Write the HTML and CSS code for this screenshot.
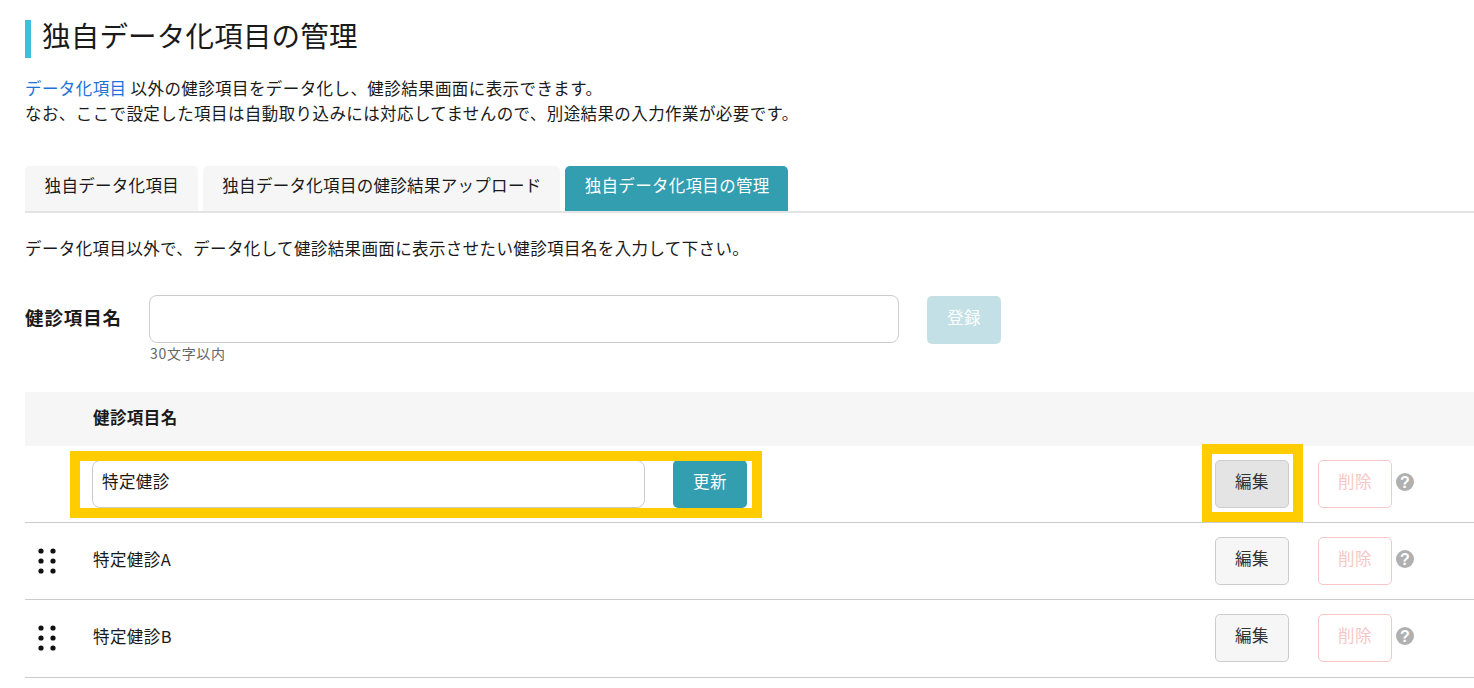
FILE: index.html
```html
<!DOCTYPE html>
<html lang="ja">
<head>
<meta charset="utf-8">
<title>独自データ化項目の管理</title>
<link rel="stylesheet" href="styles.css">
</head>
<body>
<main class="page">
  <h1 class="title">独自データ化項目の管理</h1>
  <p class="intro"><a class="link" href="#">データ化項目</a> 以外の健診項目をデータ化し、健診結果画面に表示できます。<br>なお、ここで設定した項目は自動取り込みには対応してませんので、別途結果の入力作業が必要です。</p>
  <nav class="tabs">
    <a class="tab" href="#">独自データ化項目</a>
    <a class="tab" href="#">独自データ化項目の健診結果アップロード</a>
    <a class="tab tab-active" href="#">独自データ化項目の管理</a>
  </nav>
  <p class="lead">データ化項目以外で、データ化して健診結果画面に表示させたい健診項目名を入力して下さい。</p>
  <form class="form">
    <label class="form-label">健診項目名</label>
    <div class="form-field">
      <input class="input input-main" type="text">
      <small class="hint">30文字以内</small>
    </div>
    <button class="btn btn-disabled" type="button">登録</button>
  </form>
  <section class="table">
    <div class="head">健診項目名</div>
    <div class="row row-edit">
      <div class="handle"></div>
      <div class="name name-edit">
        <input class="input input-row" type="text" value="特定健診">
        <button class="btn btn-primary" type="button">更新</button>
      </div>
      <button class="btn btn-edit btn-pressed" type="button">編集</button>
      <button class="btn btn-delete" type="button">削除</button>
      <svg class="help" viewBox="0 0 18 18"><circle cx="9" cy="9" r="9" fill="#b0b0b0"/><text x="9" y="14.5" text-anchor="middle" class="help-mark">?</text></svg>
      <span class="mark mark-name"></span>
      <span class="mark mark-edit"></span>
    </div>
    <div class="row">
      <div class="handle"><svg class="dots" viewBox="0 0 18 26"><g fill="#111"><circle cx="3" cy="3" r="2.6"/><circle cx="15" cy="3" r="2.6"/><circle cx="3" cy="13" r="2.6"/><circle cx="15" cy="13" r="2.6"/><circle cx="3" cy="23" r="2.6"/><circle cx="15" cy="23" r="2.6"/></g></svg></div>
      <div class="name">特定健診A</div>
      <button class="btn btn-edit" type="button">編集</button>
      <button class="btn btn-delete" type="button">削除</button>
      <svg class="help" viewBox="0 0 18 18"><circle cx="9" cy="9" r="9" fill="#b0b0b0"/><text x="9" y="14.5" text-anchor="middle" class="help-mark">?</text></svg>
    </div>
    <div class="row">
      <div class="handle"><svg class="dots" viewBox="0 0 18 26"><g fill="#111"><circle cx="3" cy="3" r="2.6"/><circle cx="15" cy="3" r="2.6"/><circle cx="3" cy="13" r="2.6"/><circle cx="15" cy="13" r="2.6"/><circle cx="3" cy="23" r="2.6"/><circle cx="15" cy="23" r="2.6"/></g></svg></div>
      <div class="name">特定健診B</div>
      <button class="btn btn-edit" type="button">編集</button>
      <button class="btn btn-delete" type="button">削除</button>
      <svg class="help" viewBox="0 0 18 18"><circle cx="9" cy="9" r="9" fill="#b0b0b0"/><text x="9" y="14.5" text-anchor="middle" class="help-mark">?</text></svg>
    </div>
  </section>
</main>
</body>
</html>
```
FILE: styles.css
```css
* { box-sizing: border-box; }
html, body { margin: 0; padding: 0; background: #fff; overflow: hidden; }
body {
  height: 688px;
  font-family: "Noto Sans CJK JP", "Noto Sans", sans-serif;
  font-size: 16.5px;
  letter-spacing: .41px;
  color: #1a1a1a;
}
.page { padding: 20px 0 0 25px; }
.title {
  height: 38px;
  margin: 0;
  padding-left: 11px;
  border-left: 6px solid #3cc0dc;
  font-size: 28.5px;
  font-weight: 400;
  line-height: 30px;
  letter-spacing: .2px;
}
.intro { margin: 18px 0 0; line-height: 25px; }
.link { color: #1a73d8; text-decoration: none; }
.tabs {
  display: flex;
  gap: 5px;
  height: 47px;
  margin-top: 40px;
  border-bottom: 2px solid #e4e4e4;
}
.tab {
  padding: 0 18.7px 0 19.6px;
  background: #f6f6f6;
  border-radius: 5px 5px 0 0;
  color: #1a1a1a;
  letter-spacing: .3px;
  line-height: 39px;
  text-decoration: none;
}
.tab-active { background: #329eb0; color: #fff; }
.lead { margin: 23px 0 0; letter-spacing: .38px; line-height: 24px; }
.form { display: flex; align-items: flex-start; margin-top: 35px; }
.form-label {
  width: 124px;
  font-size: 18.5px;
  font-weight: 700;
  letter-spacing: .9px;
  line-height: 44px;
}
.form-field { display: flex; flex-direction: column; width: 750px; }
.input {
  height: 48px;
  padding: 0 9px 5px;
  border: 1px solid #ccc;
  border-radius: 8px;
  background: #fff;
  font: inherit;
  letter-spacing: inherit;
  color: #1a1a1a;
}
.input-main { width: 750px; }
.hint {
  margin: 1px 0 0 1px;
  font-size: 14px;
  letter-spacing: .7px;
  line-height: 18px;
  color: #666;
}
.btn {
  width: 74px;
  height: 48px;
  padding: 0 0 6px;
  border: 1px solid transparent;
  border-radius: 5px;
  font: inherit;
  letter-spacing: inherit;
}
.btn-disabled { margin: 1px 0 0 28px; background: #c2e0e5; color: #fff; }
.btn-primary { margin-left: 28px; background: #329eb0; color: #fff; }
.btn-edit { margin-left: auto; border-color: #ccc; background: #f6f6f6; color: #333; }
.btn-pressed { background: #e4e4e4; }
.btn-delete { margin-left: 29px; border-color: #f8c6c6; background: #fff; color: #f8c6c6; }
.table { margin-top: 30px; }
.head {
  height: 54px;
  padding-left: 68px;
  background: #f6f6f6;
  font-weight: 700;
  line-height: 50px;
}
.row {
  position: relative;
  display: flex;
  align-items: center;
  height: 77.2px;
  padding-right: 70px;
  border-bottom: 1px solid #ccc;
}
.handle { display: flex; justify-content: center; flex: none; width: 68px; padding-right: 25px; }
.dots { display: block; width: 18px; height: 26px; }
.name { padding-bottom: 4px; }
.name-edit { display: flex; align-items: center; padding-bottom: 0; margin-left: -1px; }
.input-row { width: 553px; margin-top: -1px; }
.help { flex: none; width: 18px; height: 18px; margin-left: 4px; margin-right: -10px; margin-top: -5px; }
.help-mark {
  font-family: "Liberation Sans", sans-serif;
  font-size: 16px;
  font-weight: 700;
  letter-spacing: 0;
  fill: #fff;
}
.mark { position: absolute; border: 10px solid #fc0; pointer-events: none; }
.mark-name { left: 45px; top: 5px; width: 692px; height: 67px; }
.mark-edit { left: 1177px; top: -2px; width: 101px; height: 78px; }
```
